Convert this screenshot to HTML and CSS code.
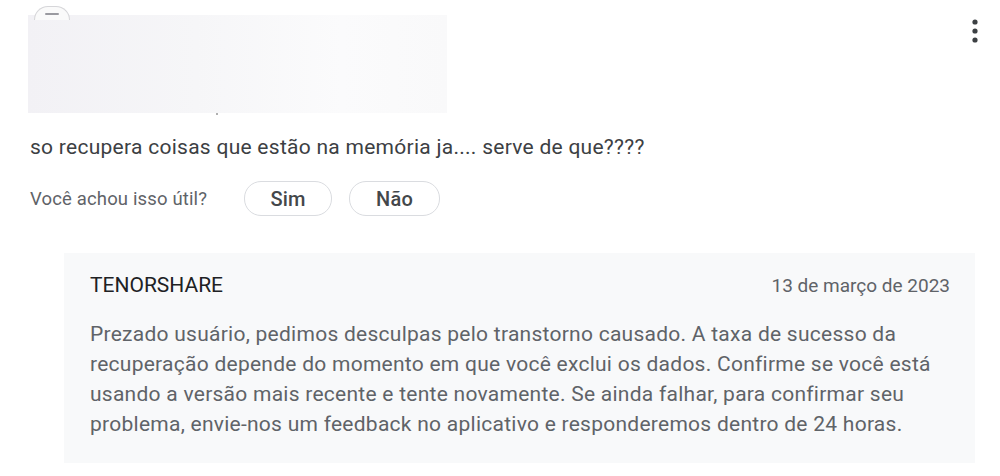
FILE: index.html
```html
<!DOCTYPE html>
<html lang="pt">
<head>
<meta charset="utf-8">
<link rel="stylesheet" href="styles.css">
</head>
<body>
<div class="review">
  <div class="head">
    <div class="redacted">
      <span class="avatar"></span>
      <span class="dot"></span>
    </div>
    <button class="more" aria-label="Mais opções">
      <svg width="6" height="24" viewBox="0 0 6 24"><circle cx="3" cy="3" r="2.6"/><circle cx="3" cy="12" r="2.6"/><circle cx="3" cy="21" r="2.6"/></svg>
    </button>
  </div>
  <p class="text">so recupera coisas que estão na memória ja.... serve de que????</p>
  <div class="helpful">
    <span class="q">Você achou isso útil?</span>
    <button class="pill">Sim</button>
    <button class="pill">Não</button>
  </div>
  <div class="reply">
    <div class="reply-head">
      <span class="dev">TENORSHARE</span>
      <span class="date">13 de março de 2023</span>
    </div>
    <p class="reply-text">Prezado usuário, pedimos desculpas pelo transtorno causado. A taxa de sucesso da recuperação depende do momento em que você exclui os dados. Confirme se você está usando a versão mais recente e tente novamente. Se ainda falhar, para confirmar seu problema, envie-nos um feedback no aplicativo e responderemos dentro de 24 horas.</p>
  </div>
</div>
</body>
</html>
```
FILE: styles.css
```css
* { box-sizing: border-box; }
html, body { margin: 0; background: #fff; }
body { font-family: Roboto, "Noto Sans", Arial, sans-serif; color: #3c4043; }
.review { padding: 0 0 0 30px; width: 1000px; }
.head { display: flex; justify-content: space-between; align-items: flex-start; padding-top: 15px; }
.redacted {
  position: relative;
  margin-left: -2px;
  width: 419px; height: 98px;
  background: linear-gradient(90deg, #f2f1f5 0%, #f6f6f8 40%, #fbfbfc 75%, #f9f9fa 100%);
}
.avatar {
  position: absolute; left: 6px; top: -9px;
  width: 36px; height: 14px;
  border-radius: 18px 18px 0 0;
  border: 1px solid #d6d6d9; border-bottom: none;
  background: #fafafa;
}
.avatar::after {
  content: ""; position: absolute; left: 10px; top: 6px; width: 14px; height: 2px; background: #9a9aa0; border-radius: 1px;
}
.dot { position: absolute; left: 188px; bottom: -2px; width: 2px; height: 2px; background: #b0b0b0; }
.more {
  border: 0; background: none; padding: 0; margin: 4px 22px 0 0; line-height: 0;
  fill: #3c4043;
}
.text { margin: 22px 0 0; font-size: 21px; line-height: 24px; color: #3c4043; letter-spacing: 0.27px; }
.helpful { display: flex; align-items: center; margin-top: 22px; }
.q { font-size: 18.5px; color: #5f6368; width: 214px; letter-spacing: 0.15px; }
.pill {
  font-family: inherit; font-size: 20px; font-weight: 500; color: #44474a;
  background: #fff; border: 1px solid #dadce0; border-radius: 17px;
  height: 35px; padding: 0; margin-right: 17px; letter-spacing: 0.2px;
}
.pill:nth-of-type(1) { width: 88px; }
.pill:nth-of-type(2) { width: 91px; }
.reply {
  margin: 37px 25px 0 34px; background: #f8f9fa;
  padding: 20px 25px 24px 26px; height: 210px;
}
.reply-head { display: flex; justify-content: space-between; align-items: baseline; line-height: 24px; }
.dev { font-size: 21px; color: #202124; }
.date { font-size: 19px; color: #5f6368; }
.reply-text { margin: 21px 0 0; font-size: 21px; line-height: 30px; color: #5f6368; letter-spacing: 0.26px; }
```
